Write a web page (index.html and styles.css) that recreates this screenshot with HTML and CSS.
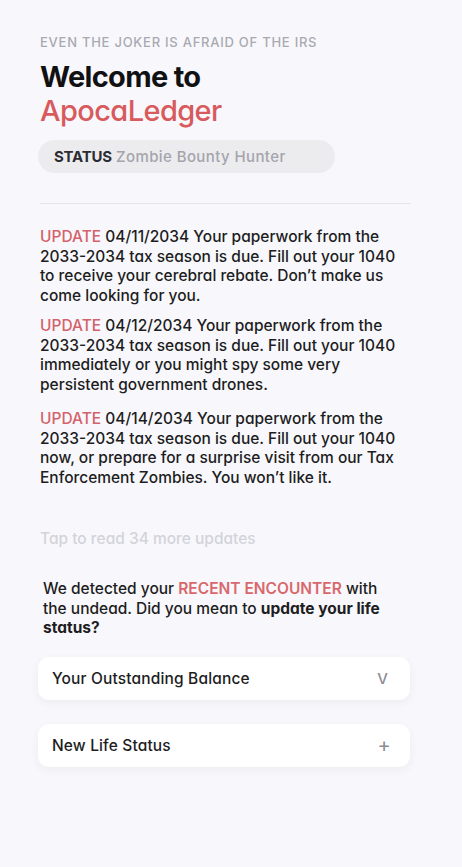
FILE: index.html
```html
<!DOCTYPE html>
<html lang="en">
<head>
<meta charset="utf-8">
<title>ApocaLedger</title>
<link rel="stylesheet" href="styles.css">
</head>
<body>
<main class="screen">
  <header class="intro">
    <p class="tagline">EVEN THE JOKER IS AFRAID OF THE IRS</p>
    <h1 class="title">Welcome to<br><span class="brand">ApocaLedger</span></h1>
    <div class="status"><b>STATUS</b> Zombie Bounty Hunter</div>
  </header>
  <hr class="divider">
  <section class="updates">
    <p class="update"><span class="tag">UPDATE</span> 04/11/2034 Your paperwork from the<br>2033-2034 tax season is due. Fill out your 1040<br>to receive your cerebral rebate. Don’t make us<br>come looking for you.</p>
    <p class="update"><span class="tag">UPDATE</span> 04/12/2034 Your paperwork from the<br>2033-2034 tax season is due. Fill out your 1040<br>immediately or you might spy some very<br>persistent government drones.</p>
    <p class="update third"><span class="tag">UPDATE</span> 04/14/2034 Your paperwork from the<br>2033-2034 tax season is due. Fill out your 1040<br>now, or prepare for a surprise visit from our Tax<br>Enforcement Zombies. You won’t like it.</p>
  </section>
  <p class="more">Tap to read 34 more updates</p>
  <p class="detect">We detected your <span class="alert">RECENT ENCOUNTER</span> with<br>the undead. Did you mean to <b>update your life<br>status?</b></p>
  <div class="cards">
    <div class="card"><span>Your Outstanding Balance</span><span class="icon">V</span></div>
    <div class="card"><span>New Life Status</span><span class="icon plus">+</span></div>
  </div>
</main>
</body>
</html>
```

FILE: styles.css
```css
* { box-sizing: border-box; }
html, body { margin: 0; padding: 0; }
body {
  background: #f8f8fc;
  font-family: Inter, "Noto Sans", sans-serif;
  font-feature-settings: "cv11" 1;
  color: #1d1d22;
  width: 462px;
  min-height: 867px;
}
.screen {
  padding: 33px 51px 40px 40px;
}
.tagline {
  margin: 0;
  font-size: 13px;
  line-height: 18px;
  font-weight: 500;
  color: #a9a9b1;
  letter-spacing: 0.75px;
}
.title {
  margin: 9px 0 0;
  font-size: 29px;
  line-height: 34px;
  font-weight: 700;
  letter-spacing: -0.7px;
  color: #111114;
}
.brand {
  color: #d85a5d;
  font-weight: 500;
  letter-spacing: -0.6px;
}
.status {
  margin-top: 12px;
  width: 297px;
  height: 33px;
  margin-left: -2px;
  padding: 0 16px;
  display: flex;
  align-items: center;
  gap: 4px;
  border-radius: 17px;
  background: #ececef;
  color: #a4a4ab;
  font-size: 15px;
  font-weight: 500;
  letter-spacing: 0.4px;
}
.status b { color: #2c2c32; font-weight: 700; letter-spacing: -0.2px; }
.divider {
  margin: 30px 0 0;
  border: 0;
  border-top: 1.5px solid #e5e5ea;
  width: 371px;
}
.updates { margin-top: 23px; }
.update {
  margin: 0 0 11px;
  font-size: 15.5px;
  line-height: 19.5px;
  font-weight: 500;
  letter-spacing: 0;
  white-space: nowrap;
}
.update.third { margin-top: 15px; }
.tag { color: #d4626a; }
.more {
  margin: 42px 0 0;
  font-size: 15.5px;
  line-height: 20px;
  font-weight: 500;
  color: #d3d3da;
}
.detect {
  margin: 30px 0 0 3px;
  font-size: 15.5px;
  line-height: 19.5px;
  font-weight: 500;
  white-space: nowrap;
}
.alert { color: #d9686d; font-weight: 600; }
.detect b { font-weight: 700; }
.cards {
  margin-top: 19px;
  margin-left: -2px;
  display: flex;
  flex-direction: column;
  gap: 24px;
}
.card {
  width: 372px;
  height: 43px;
  background: #ffffff;
  border-radius: 11px;
  box-shadow: 0 3px 8px rgba(30, 30, 60, 0.06);
  display: flex;
  align-items: center;
  justify-content: space-between;
  padding: 0 22px 0 14px;
  font-size: 15.5px;
  font-weight: 500;
  letter-spacing: 0.15px;
  color: #1d1d22;
}
.icon { color: #8d8d94; font-size: 15px; }
.icon.plus { font-size: 20px; font-weight: 400; margin-right: -3px; }
```
